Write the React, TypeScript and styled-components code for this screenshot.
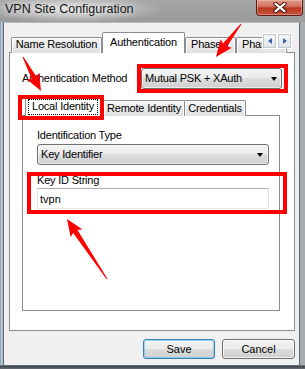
import React from 'react';
import styled, { createGlobalStyle } from 'styled-components';

const Global = createGlobalStyle`
  html, body { margin: 0; padding: 0; background: #fff; }
  body { font-family: "Liberation Sans", Arial, sans-serif; font-size: 11px; color: #000; letter-spacing: -0.2px; }
  * { box-sizing: border-box; }
`;

const Window = styled.div`
  position: relative;
  width: 305px;
  height: 369px;
  display: flex;
  flex-direction: column;
  overflow: hidden;
  background:
    linear-gradient(180deg, rgba(0,0,0,0) 365px, #3b4047 366px, #6a7078 369px),
    linear-gradient(90deg, #7f95aa 0px, #cfdbe6 2px, #8f99a3 3px, #a3a7ab 50%, #a9acaf 100%);
`;

const TitleBar = styled.div`
  flex: none;
  height: 22px;
  display: flex;
  align-items: flex-start;
  padding-left: 5px;
  background:
    radial-gradient(ellipse 90px 14px at 72px 9px, rgba(232,232,232,0.95) 0%, rgba(205,205,205,0.7) 55%, rgba(170,170,170,0) 100%),
    linear-gradient(180deg, #a6a6a6 0%, #9b9b9b 100%);
`;

const Title = styled.div`
  padding-top: 2px;
  font-size: 12.5px;
  line-height: 15px;
  letter-spacing: 0;
  color: #141414;
  text-shadow: 0 0 6px rgba(255,255,255,0.9);
`;

const CloseButton = styled.div`
  margin-left: auto;
  margin-right: 2px;
  width: 47px;
  height: 16px;
  border: 1px solid #5c1d14;
  border-top: none;
  border-radius: 0 0 4px 4px;
  background: linear-gradient(180deg, #e29c8c 0%, #d27563 40%, #b8381f 55%, #c9553d 100%);
  box-shadow: inset 0 0 0 1px rgba(255,200,190,0.45);
  display: flex;
  align-items: center;
  justify-content: center;
`;

const Client = styled.div`
  flex: none;
  height: 344px;
  margin: 0 5px 0 3px;
  background: #f0f0f0;
  border: 1px solid #5f6873;
  border-top-color: #b5bcc4;
  padding: 9px 4px 6px 5px;
  display: flex;
  flex-direction: column;
`;

const TabControl = styled.div`
  position: relative;
  display: flex;
  flex-direction: column;
`;

const TabStrip = styled.div<{ $h: number; $clip?: boolean }>`
  position: relative;
  z-index: 1;
  display: flex;
  align-items: flex-end;
  height: ${p => p.$h}px;
  margin-bottom: -1px;
  overflow: ${p => (p.$clip ? 'hidden' : 'visible')};
`;

const Tab = styled.div<{ $sel?: boolean; $w: number; $h: number; $ml?: number; $pt?: number; $px?: number }>`
  position: relative;
  flex: none;
  width: ${p => p.$w}px;
  height: ${p => p.$h}px;
  margin-left: ${p => p.$ml ?? 0}px;
  padding: ${p => p.$pt ?? 0}px ${p => p.$px ?? 0}px 0;
  border: 1px solid #898c95;
  border-bottom: none;
  border-radius: 2px 2px 0 0;
  background: ${p => (p.$sel ? '#fff' : 'linear-gradient(180deg, #f4f4f4 0%, #e9e9e9 55%, #e0e0e0 100%)')};
  box-shadow: ${p => (p.$sel ? 'none' : 'inset 1px 1px 0 #fff, inset -1px 0 0 #fbfbfb')};
  text-align: center;
  line-height: 13px;
  white-space: nowrap;
  overflow: hidden;
`;

const FocusRing = styled.div`
  height: 16px;
  border: 1px dotted #000;
  padding-bottom: 1px;
  line-height: 13px;
  text-align: center;
`;

const Scroller = styled.div`
  position: absolute;
  top: 1px;
  right: 3px;
  z-index: 2;
  display: flex;
`;

const ScrollBtn = styled.div`
  width: 15px;
  height: 16px;
  border: 1px solid #fff;
  box-shadow: inset 0 0 0 1px #c3c7cc;
  background: linear-gradient(180deg, #f3f4f6, #e3e6ea);
  display: flex;
  align-items: center;
  justify-content: center;
`;

const Tri = styled.span<{ $dir: 'left' | 'right' }>`
  width: 0;
  height: 0;
  border-top: 3.5px solid transparent;
  border-bottom: 3.5px solid transparent;
  ${p => (p.$dir === 'left' ? 'border-right: 4px solid #3f68b0;' : 'border-left: 4px solid #3f68b0;')}
`;

const Panel = styled.div<{ $h: number; $w?: number }>`
  position: relative;
  height: ${p => p.$h}px;
  width: ${p => (p.$w ? `${p.$w}px` : 'auto')};
  background: #fff;
  border: 1px solid #898c95;
  display: flex;
  flex-direction: column;
`;

const OuterBody = styled.div`
  display: flex;
  flex-direction: column;
  padding: 15px 12px 0 12px;
`;

const MethodRow = styled.div`
  display: flex;
  align-items: center;
  justify-content: space-between;
  height: 21px;
`;

const Label = styled.div`
  line-height: 13px;
  white-space: nowrap;
`;

const Marked = styled.div<{ $inset: string; $mt?: number }>`
  position: relative;
  margin-top: ${p => p.$mt ?? 0}px;
  &::after {
    content: '';
    position: absolute;
    inset: ${p => p.$inset};
    border: 4px solid #ff0000;
    pointer-events: none;
    z-index: 3;
  }
`;

const Combo = styled.div<{ $w: number; $caret: number }>`
  width: ${p => p.$w}px;
  height: 21px;
  border: 1px solid #707070;
  border-radius: 3px;
  background: linear-gradient(180deg, #f2f2f2 0%, #ebebeb 50%, #dddddd 50%, #cfcfcf 100%);
  box-shadow: inset 0 0 0 1px rgba(255,255,255,0.55);
  display: flex;
  align-items: center;
  padding: 0 ${p => p.$caret}px 0 3px;
  line-height: 13px;
  white-space: nowrap;
`;

const Caret = styled.span`
  margin-left: auto;
  width: 0;
  height: 0;
  border-left: 3.5px solid transparent;
  border-right: 3.5px solid transparent;
  border-top: 4px solid #000;
`;

const InnerSection = styled.div`
  display: flex;
  flex-direction: column;
  margin-top: 8px;
`;

const InnerBody = styled.div`
  display: flex;
  flex-direction: column;
  padding: 13px 0 0 14px;
`;

const Field = styled.div<{ $gap: number }>`
  display: flex;
  flex-direction: column;
  gap: ${p => p.$gap}px;
  width: 232px;
`;

const TextInput = styled.input`
  width: 232px;
  height: 21px;
  border: 1px solid;
  border-color: #abadb3 #dbdfe6 #e3e9ef #e2e3ea;
  background: #fff;
  padding: 0 2px;
  margin: 0;
  font: inherit;
  font-size: 11px;
  color: #000;
  outline: none;
`;

const ButtonRow = styled.div`
  display: flex;
  justify-content: flex-end;
  gap: 7px;
  margin-top: 8px;
`;

const Button = styled.button<{ $w: number; $default?: boolean }>`
  width: ${p => p.$w}px;
  height: 20px;
  padding: 0;
  border: 1px solid ${p => (p.$default ? '#3c7fb1' : '#707070')};
  border-radius: 3px;
  background: linear-gradient(180deg, #f2f2f2 0%, #ebebeb 50%, #dddddd 50%, #cfcfcf 100%);
  box-shadow: inset 0 0 0 1px ${p => (p.$default ? 'rgba(80,200,245,0.6)' : 'rgba(255,255,255,0.7)')};
  font: inherit;
  font-size: 11px;
  color: #000;
  line-height: 13px;
`;

const Overlay = styled.svg`
  position: absolute;
  left: 0;
  top: 0;
  z-index: 10;
  pointer-events: none;
`;

type Pt = [number, number];

const arrowPoints = (tail: Pt, tip: Pt, head = 15, wing = 7, shaft = 2.6) => {
  const dx = tip[0] - tail[0];
  const dy = tip[1] - tail[1];
  const len = Math.hypot(dx, dy);
  const ux = dx / len;
  const uy = dy / len;
  const nx = -uy;
  const ny = ux;
  const bx = tip[0] - ux * head;
  const by = tip[1] - uy * head;
  const back = 2;
  const pts: Pt[] = [
    [tail[0] + nx * 0.5, tail[1] + ny * 0.5],
    [bx + nx * shaft, by + ny * shaft],
    [bx + nx * wing - ux * back, by + ny * wing - uy * back],
    tip,
    [bx - nx * wing - ux * back, by - ny * wing - uy * back],
    [bx - nx * shaft, by - ny * shaft],
    [tail[0] - nx * 0.5, tail[1] - ny * 0.5],
  ];
  return pts.map(p => `${p[0].toFixed(1)},${p[1].toFixed(1)}`).join(' ');
};

const arrows: { tail: Pt; tip: Pt }[] = [
  { tail: [241, 24], tip: [216, 57] },
  { tail: [23, 57], tip: [41, 91] },
  { tail: [107, 279], tip: [67, 219] },
];

const outerTabs = [
  { label: 'Name Resolution', w: 91 },
  { label: 'Authentication', w: 83, sel: true },
  { label: 'Phase 1', w: 51 },
  { label: 'Phase 2', w: 51 },
];

export default function App() {
  return (
    <>
      <Global />
      <Window>
        <TitleBar>
          <Title>VPN Site Configuration</Title>
          <CloseButton>
            <svg width="14" height="11" viewBox="0 0 14 11">
              <path d="M2.5 1.8 L11.5 9.2 M11.5 1.8 L2.5 9.2" stroke="#3d0c06" strokeWidth="4.2" strokeLinecap="round" />
              <path d="M2.5 1.8 L11.5 9.2 M11.5 1.8 L2.5 9.2" stroke="#ffffff" strokeWidth="2.3" strokeLinecap="round" />
            </svg>
          </CloseButton>
        </TitleBar>
        <Client>
          <TabControl>
            <TabStrip $h={21} $clip>
              {outerTabs.map((t, i) => (
                <Tab
                  key={t.label}
                  $sel={t.sel}
                  $w={t.w}
                  $h={t.sel ? 21 : 16}
                  $pt={t.sel ? 3 : 0}
                  $ml={i === 0 ? 2 : 0}
                >
                  {t.label}
                </Tab>
              ))}
            </TabStrip>
            <Scroller>
              <ScrollBtn><Tri $dir="left" /></ScrollBtn>
              <ScrollBtn><Tri $dir="right" /></ScrollBtn>
            </Scroller>
            <Panel $h={279}>
              <OuterBody>
                <MethodRow>
                  <Label>Authentication Method</Label>
                  <Marked $inset="-4px -6px -4px -4px">
                    <Combo $w={141} $caret={4}>
                      Mutual PSK + XAuth
                      <Caret />
                    </Combo>
                  </Marked>
                </MethodRow>
                <InnerSection>
                  <TabStrip $h={19}>
                    <Marked $inset="-2px -3px -4px -4px">
                      <Tab $sel $w={76} $h={19} $ml={3} $pt={1} $px={2}>
                        <FocusRing>Local Identity</FocusRing>
                      </Tab>
                    </Marked>
                    <Tab $w={82} $h={16} $ml={2} $pt={1}>Remote Identity</Tab>
                    <Tab $w={62} $h={16} $ml={-1} $pt={1}>Credentials</Tab>
                  </TabStrip>
                  <Panel $h={196} $w={258}>
                    <InnerBody>
                      <Field $gap={2}>
                        <Label>Identification Type</Label>
                        <Combo $w={232} $caret={5}>
                          Key Identifier
                          <Caret />
                        </Combo>
                      </Field>
                      <Marked $inset="-2px -8px -5px -10px" $mt={9}>
                        <Field $gap={1}>
                          <Label>Key ID String</Label>
                          <TextInput readOnly value="tvpn" />
                        </Field>
                      </Marked>
                    </InnerBody>
                  </Panel>
                </InnerSection>
              </OuterBody>
            </Panel>
          </TabControl>
          <ButtonRow>
            <Button $w={72} $default>Save</Button>
            <Button $w={73}>Cancel</Button>
          </ButtonRow>
        </Client>
        <Overlay width={305} height={369} viewBox="0 0 305 369">
          {arrows.map((a, i) => (
            <polygon key={i} points={arrowPoints(a.tail, a.tip)} fill="#ff0000" />
          ))}
        </Overlay>
      </Window>
    </>
  );
}
